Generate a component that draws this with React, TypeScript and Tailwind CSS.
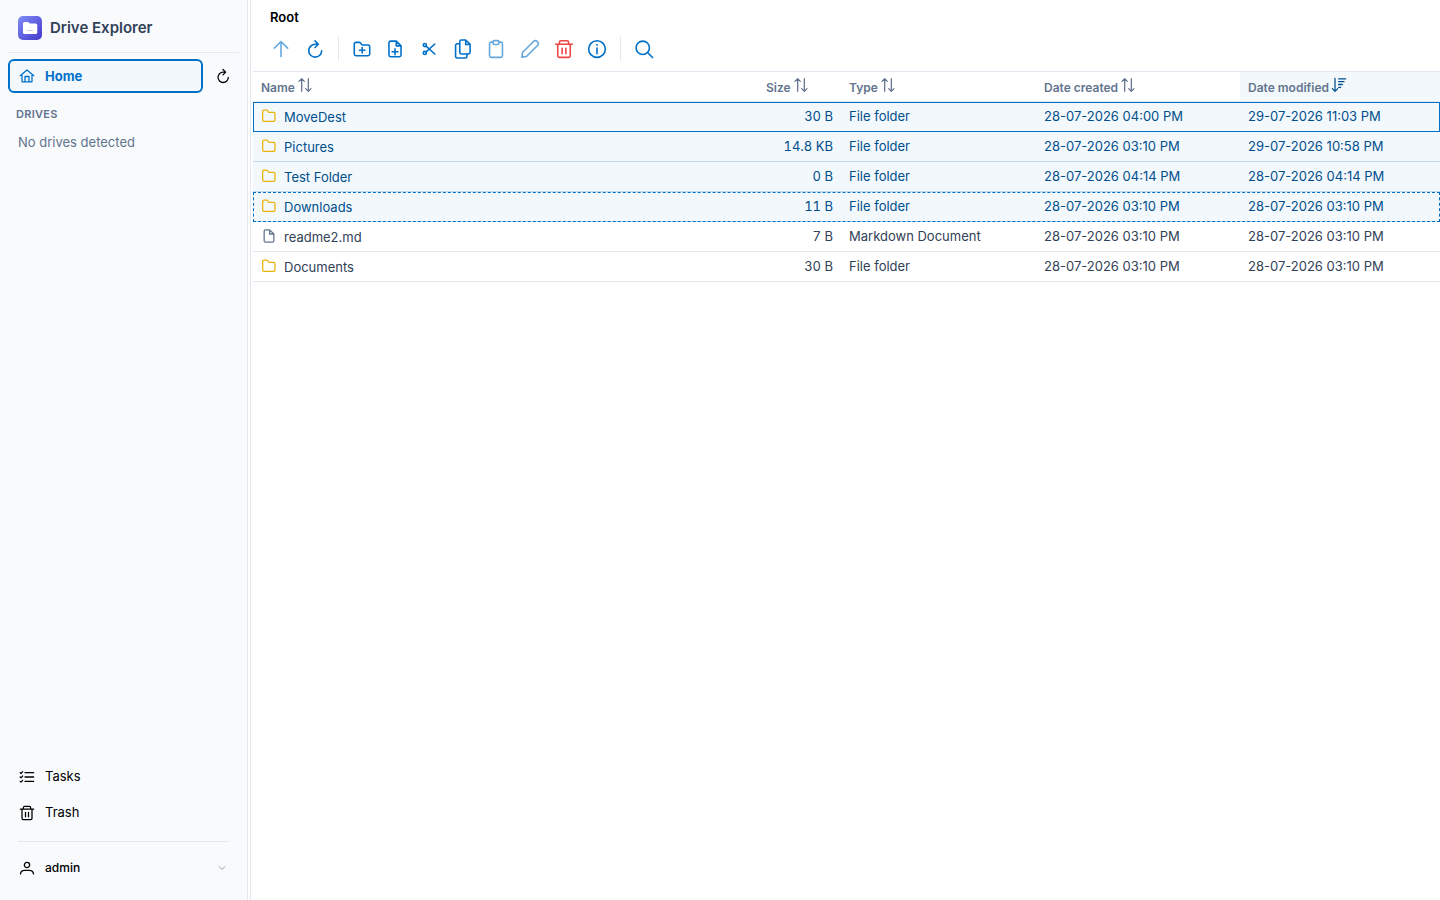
import React, { useState } from 'react';

const icons: Record<string, React.ReactNode> = {
  up: <path d="M12 21V3M4 11l8-8 8 8" />,
  refresh: <path d="M20 14A7.75 7.75 0 1 1 12.25 6.25H16M12 2.25l4 4-4 4" />,
  folder: <path d="M2.5 18V5.25a2 2 0 0 1 2-2h4.5l3 3.25h7a2 2 0 0 1 2 2V18a2 2 0 0 1-2 2H4.5a2 2 0 0 1-2-2z" />,
  folderPlus: (
    <path d="M2.75 18V6a2 2 0 0 1 2-2h4.5l3 3.25h7a2 2 0 0 1 2 2V18a2 2 0 0 1-2 2H4.75a2 2 0 0 1-2-2zM12.25 10.25v6.5M9 13.5h6.5" />
  ),
  file: <path d="M13 2.75H6.75a2 2 0 0 0-2 2v14.5a2 2 0 0 0 2 2h10.5a2 2 0 0 0 2-2V9L13 2.75V9h6.25" />,
  filePlus: (
    <path d="M13.5 2.5H6.75a2 2 0 0 0-2 2v14.75a2 2 0 0 0 2 2h10.5a2 2 0 0 0 2-2V8.25L13.5 2.5v5.75h5.75M12 11.75v7M8.5 15.25h7" />
  ),
  cut: (
    <>
      <circle cx="7" cy="7.25" r="1.9" />
      <circle cx="7" cy="16.75" r="1.9" />
      <path d="M8.5 8.5 19 18M8.5 15.5 19 6" />
    </>
  ),
  copy: (
    <>
      <path d="M15.25 1.25H10a1.9 1.9 0 0 0-1.9 1.9V16a1.9 1.9 0 0 0 1.9 1.9h8.6a1.9 1.9 0 0 0 1.9-1.9V6.5zV6.5h5.25" />
      <path d="M8 5.75H5a1.9 1.9 0 0 0-1.9 1.9v13.2a1.9 1.9 0 0 0 1.9 1.9h9.75a1.9 1.9 0 0 0 1.9-1.9V18" />
    </>
  ),
  paste: (
    <>
      <path d="M8.5 3.75H6.25a2 2 0 0 0-2 2V20a2 2 0 0 0 2 2h11.5a2 2 0 0 0 2-2V5.75a2 2 0 0 0-2-2H15.5" />
      <rect x="8.5" y="2" width="7" height="4.5" rx="1.25" />
    </>
  ),
  pencil: <path d="M2.25 21.75l.75-5.5L16.5 2.75a2.6 2.6 0 0 1 3.75 0l1 1a2.6 2.6 0 0 1 0 3.75L7.75 21z" />,
  trash: (
    <path d="M2 6.25h20M6.5 6V4a2 2 0 0 1 2-2h7a2 2 0 0 1 2 2v2M4.5 6.5V20a2 2 0 0 0 2 2h11a2 2 0 0 0 2-2V6.5M9.75 11v6.75M14.25 11v6.75" />
  ),
  info: (
    <>
      <circle cx="12" cy="12" r="10" />
      <path d="M12 10.75v7M12 6.75v.75" />
    </>
  ),
  search: (
    <>
      <circle cx="10.5" cy="10.5" r="8" />
      <path d="M16.25 16.25l6 6" />
    </>
  ),
  home: <path d="M1.75 11.5 12 3l10.25 8.5M4.5 9.5v11.25h15V9.5M9 20.5v-7.75h6v7.75" />,
  tasks: (
    <path d="M9 5.5h13M9 12h13M9 18.5h13M1.75 5.5l1.25 1.25 2.5-2.75M1.75 12l1.25 1.25 2.5-2.75M1.75 18.5l1.25 1.25 2.5-2.75" />
  ),
  user: (
    <>
      <circle cx="12" cy="7.5" r="4" />
      <path d="M2.25 20.75c.5-3.75 3-5.25 6-5.25h7.5c3 0 5.5 1.5 6 5.25" />
    </>
  ),
  chevron: <path d="M3 8l9 8 9-8" />,
  sort: <path d="M7 21.5V2.5M3 6.5l4-4 4 4M17 2.5v19M13 17.5l4 4 4-4" />,
  sortDown: <path d="M6 2v19.5M2 17.5l4 4 4-4M11.5 2.75h10.5M11.5 7h8M11.5 11.25h5.5M11.5 15.5h3" />,
};

function Icon({ name, className }: { name: string; className: string }) {
  return (
    <svg
      viewBox="0 0 24 24"
      fill="none"
      stroke="currentColor"
      strokeWidth="1.9"
      strokeLinecap="round"
      strokeLinejoin="round"
      aria-hidden="true"
      className={`shrink-0 ${className}`}
    >
      {icons[name]}
    </svg>
  );
}

const files = [
  { name: 'MoveDest', size: '30 B', type: 'File folder', created: '28-07-2026 04:00 PM', modified: '29-07-2026 11:03 PM' },
  { name: 'Pictures', size: '14.8 KB', type: 'File folder', created: '28-07-2026 03:10 PM', modified: '29-07-2026 10:58 PM' },
  { name: 'Test Folder', size: '0 B', type: 'File folder', created: '28-07-2026 04:14 PM', modified: '28-07-2026 04:14 PM' },
  { name: 'Downloads', size: '11 B', type: 'File folder', created: '28-07-2026 03:10 PM', modified: '28-07-2026 03:10 PM' },
  { name: 'readme2.md', size: '7 B', type: 'Markdown Document', created: '28-07-2026 03:10 PM', modified: '28-07-2026 03:10 PM' },
  { name: 'Documents', size: '30 B', type: 'File folder', created: '28-07-2026 03:10 PM', modified: '28-07-2026 03:10 PM' },
];

const columns = [
  { label: 'Name', width: '' },
  { label: 'Size', width: 'w-[83px]' },
  { label: 'Type', width: 'w-[195px]' },
  { label: 'Date created', width: 'w-[204px]' },
  { label: 'Date modified', width: 'w-[200px]' },
];

const actions = [
  { icon: 'folderPlus', label: 'New folder' },
  { icon: 'filePlus', label: 'New file' },
  { icon: 'cut', label: 'Cut' },
  { icon: 'copy', label: 'Copy' },
  { icon: 'paste', label: 'Paste', disabled: true },
  { icon: 'pencil', label: 'Rename', disabled: true },
  { icon: 'trash', label: 'Delete', danger: true },
  { icon: 'info', label: 'Properties' },
];

function ToolButton({ icon, label, disabled, danger }: { icon: string; label: string; disabled?: boolean; danger?: boolean }) {
  return (
    <button
      type="button"
      aria-label={label}
      disabled={disabled}
      className={`flex h-8 items-center justify-center rounded-md disabled:opacity-60 ${danger ? 'text-[#ef4444]' : 'text-[#0070c9]'}`}
    >
      <Icon name={icon} className="size-5" />
    </button>
  );
}

function Sidebar() {
  return (
    <aside className="flex w-[248px] shrink-0 flex-col border-r border-slate-200 bg-slate-50 px-2">
      <div className="flex h-[53px] items-center gap-2 border-b border-slate-200 px-[10px] pt-1">
        <svg viewBox="0 0 24 24" className="size-6" aria-hidden="true">
          <defs>
            <linearGradient id="logo" x1="0" y1="0" x2="1" y2="1">
              <stop offset="0" stopColor="#818cf8" />
              <stop offset="1" stopColor="#4338ca" />
            </linearGradient>
          </defs>
          <rect width="24" height="24" rx="5" fill="url(#logo)" />
          <path d="M5 7.5A1.5 1.5 0 0 1 6.5 6h3.75l1.5 1.5h6A1.5 1.5 0 0 1 19.25 9v7.5a1.5 1.5 0 0 1-1.5 1.5H6.5A1.5 1.5 0 0 1 5 16.5z" fill="#fff" />
          <path d="M9 14.5h6" stroke="#c7c9f9" strokeWidth="1" />
        </svg>
        <span className="text-[15px] font-semibold text-slate-700">Drive Explorer</span>
      </div>

      <div className="mt-[6px] flex items-center">
        <button
          type="button"
          className="flex h-[34px] flex-1 items-center gap-[10px] rounded-md border-2 border-[#0070c9] bg-[#f2f8fc] px-[9px] font-bold text-[#0070c9]"
        >
          <Icon name="home" className="size-4" />
          <span className="pt-px">Home</span>
        </button>
        <button type="button" aria-label="Refresh drives" className="mr-2 ml-3 flex h-8 w-4 items-center justify-center">
          <Icon name="refresh" className="size-4" />
        </button>
      </div>

      <h2 className="mt-3 px-2 text-[11px] leading-[18px] font-semibold tracking-wide text-slate-500">DRIVES</h2>
      <p className="mt-[9px] px-[10px] leading-5 text-slate-500">No drives detected</p>

      <nav className="mt-auto flex flex-col">
        <a href="#tasks" className="flex h-9 items-center gap-[10px] px-[11px]">
          <Icon name="tasks" className="size-4" />
          Tasks
        </a>
        <a href="#trash" className="flex h-9 items-center gap-[10px] px-[11px]">
          <Icon name="trash" className="size-4" />
          Trash
        </a>
      </nav>
      <div className="mx-[10px] mt-[10px] mb-4 border-t border-slate-200 pt-[10px]">
        <button type="button" className="flex h-8 w-full items-center gap-[10px] px-px text-xs font-medium">
          <Icon name="user" className="size-4" />
          admin
          <Icon name="chevron" className="mr-[2px] ml-auto size-2 text-slate-500" />
        </button>
      </div>
    </aside>
  );
}

export default function App() {
  const [selected, setSelected] = useState(['MoveDest', 'Pictures', 'Test Folder', 'Downloads']);

  const toggle = (name: string) => {
    setSelected(selected.includes(name) ? selected.filter((n) => n !== name) : [...selected, name]);
  };

  return (
    <div className="flex min-h-screen bg-white font-['Inter',sans-serif] text-[13px] text-black">
      <Sidebar />

      <main className="ml-[2px] min-w-0 flex-1 border-l border-slate-200 pl-[2px]">
        <h1 className="px-[17px] pt-[7px] leading-5 font-semibold">Root</h1>

        {/* Toolbar */}
        <div className="flex h-11 items-center px-[11px]">
          <div className="grid w-[68px] grid-cols-2">
            <ToolButton icon="up" label="Up" disabled />
            <ToolButton icon="refresh" label="Refresh" />
          </div>
          <div className="mx-[6px] h-6 w-px bg-slate-200" />
          <div className="grid w-[269px] grid-cols-8">
            {actions.map((action) => (
              <ToolButton key={action.label} {...action} />
            ))}
          </div>
          <div className="mx-[6px] h-6 w-px bg-slate-200" />
          <div className="grid w-[34px]">
            <ToolButton icon="search" label="Search" />
          </div>
        </div>

        {/* File list */}
        <table className="w-full table-fixed border-separate border-spacing-0 border-t border-slate-200">
          <thead>
            <tr className="h-[30px]">
              {columns.map((col) => {
                const sorted = col.label === 'Date modified';
                return (
                  <th
                    key={col.label}
                    className={`border-b border-slate-200 px-2 py-0 text-left text-xs font-semibold text-slate-500 ${col.width} ${sorted ? 'bg-[#f2f8fc]' : ''}`}
                  >
                    <button type="button" className="flex items-center gap-[2px] whitespace-nowrap">
                      <span className="pt-[2px]">{col.label}</span>
                      <Icon name={sorted ? 'sortDown' : 'sort'} className={`mb-[3px] size-4 ${sorted ? 'text-[#004f8c]' : ''}`} />
                    </button>
                  </th>
                );
              })}
            </tr>
          </thead>
          <tbody>
            {files.map((file, i) => {
              const isSelected = selected.includes(file.name);
              const isFolder = file.type === 'File folder';
              const cell = `border-b px-2 py-0 whitespace-nowrap ${isSelected ? 'border-[#bfdbf1]' : 'border-slate-200'}`;
              return (
                <tr
                  key={file.name}
                  onClick={() => toggle(file.name)}
                  className={`h-[30px] -outline-offset-1 outline-[#0070c9] ${isSelected ? 'bg-[#f2f8fc] text-[#004f8c]' : 'text-slate-700'} ${i === 0 ? 'outline-1' : ''} ${i === 3 ? 'outline-1 outline-dashed' : ''}`}
                >
                  <td className={cell}>
                    <div className="flex items-center gap-[7px]">
                      <Icon
                        name={isFolder ? 'folder' : 'file'}
                        className={`mb-[2px] size-4 ${isFolder ? 'text-[#eab308]' : 'text-slate-500'}`}
                      />
                      <span className="pt-[2px]">{file.name}</span>
                    </div>
                  </td>
                  <td className={`${cell} text-right tabular-nums`}>{file.size}</td>
                  <td className={cell}>{file.type}</td>
                  <td className={cell}>{file.created}</td>
                  <td className={cell}>{file.modified}</td>
                </tr>
              );
            })}
          </tbody>
        </table>
      </main>
    </div>
  );
}
